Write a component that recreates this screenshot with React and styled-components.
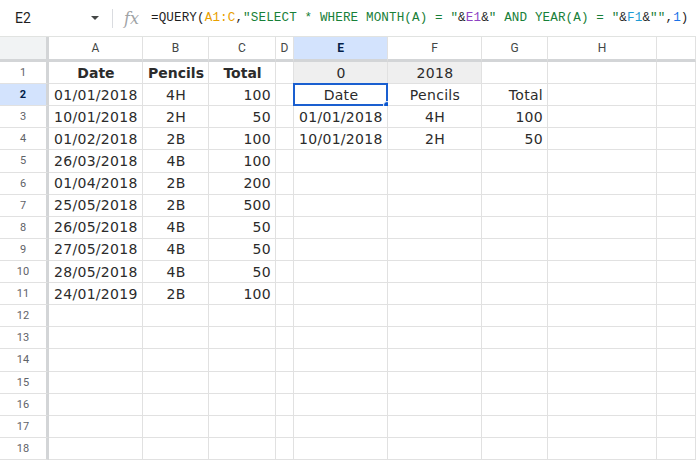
import React from 'react'
import styled, { createGlobalStyle, css } from 'styled-components'

const Global = createGlobalStyle`
  html, body {
    margin: 0;
    padding: 0;
    background: #fff;
    overflow: hidden;
  }
  * { box-sizing: border-box; }
`

const Page = styled.div`
  width: 696px;
  height: 464px;
  overflow: hidden;
  background: #fff;
`

const FormulaBar = styled.div`
  height: 37px;
  display: flex;
  align-items: center;
  border-bottom: 1px solid #e1e3e1;
`

const NameBox = styled.div`
  width: 113px;
  display: flex;
  align-items: center;
  justify-content: space-between;
  padding: 0 13px 0 15px;
  font-family: Roboto, 'Liberation Sans', sans-serif;
  font-size: 14px;
  color: #1f1f1f;
  border-right: 1px solid #dadce0;
  height: 19px;
`

const Caret = styled.span`
  width: 0;
  height: 0;
  border-left: 4px solid transparent;
  border-right: 4px solid transparent;
  border-top: 4px solid #444746;
`

const Fx = styled.span`
  margin: 0 12px 0 11px;
  font-family: 'DejaVu Serif', 'Liberation Serif', serif;
  font-style: italic;
  font-size: 16px;
  color: #a0a3a6;
`

const Formula = styled.div`
  font-family: 'Liberation Mono', monospace;
  font-size: 12.6px;
  letter-spacing: 0.12px;
  color: #1f1f1f;
  white-space: pre;
`

const Tok = styled.span`
  color: ${p => p.c};
`

const Grid = styled.div`
  display: grid;
  grid-template-columns: 49px 94px 66px 67px 18px 94px 94px 66px 109px 1fr;
  grid-template-rows: 25px;
  grid-auto-rows: 22.12px;
`

const Corner = styled.div`
  background: #f1f3f4;
  border-right: 3px solid #d3d5d7;
  border-bottom: 3px solid #d3d5d7;
`

const ColHead = styled.div`
  display: flex;
  align-items: center;
  justify-content: center;
  font-family: Roboto, 'Liberation Sans', sans-serif;
  font-size: 12px;
  color: #444746;
  border-right: 1px solid #e1e1e1;
  border-bottom: 3px solid #d3d5d7;
  ${p => p.active && css`
    background: #d3e3fd;
    color: #041e49;
    font-weight: 700;
  `}
`

const RowHead = styled.div`
  display: flex;
  align-items: center;
  justify-content: center;
  font-family: Roboto, 'Liberation Sans', sans-serif;
  font-size: 11px;
  color: #5f6368;
  border-right: 3px solid #d3d5d7;
  border-bottom: 1px solid #e1e1e1;
  ${p => p.active && css`
    background: #d3e3fd;
    color: #041e49;
    font-weight: 700;
  `}
`

const Cell = styled.div`
  position: relative;
  display: flex;
  align-items: center;
  justify-content: ${p => p.align === 'right' ? 'flex-end' : p.align === 'center' ? 'center' : 'flex-start'};
  padding: 0 4px 0 5px;
  font-family: 'DejaVu Sans', Verdana, sans-serif;
  font-size: 14px;
  letter-spacing: ${p => p.bold ? '0' : '0.3px'};
  font-weight: ${p => p.bold ? 700 : 400};
  color: #2b2b2b;
  background: ${p => p.bg || '#fff'};
  border-right: 1px solid #e1e1e1;
  border-bottom: 1px solid #e1e1e1;
  white-space: nowrap;
`

const Selection = styled.div`
  position: absolute;
  left: -1px;
  top: -1px;
  right: -1px;
  bottom: -1px;
  border: 2px solid #1a5fd0;
  pointer-events: none;
`

const Handle = styled.div`
  position: absolute;
  right: -5px;
  bottom: -5px;
  width: 8px;
  height: 8px;
  border-radius: 50%;
  background: #0b57d0;
  border: 1px solid #fff;
`

const cols = ['A', 'B', 'C', 'D', 'E', 'F', 'G', 'H', '']
const aligns = ['left', 'center', 'right', 'left', 'left', 'center', 'right', 'left', 'left']

const source = [
  ['01/01/2018', '4H', '100'],
  ['10/01/2018', '2H', '50'],
  ['01/02/2018', '2B', '100'],
  ['26/03/2018', '4B', '100'],
  ['01/04/2018', '2B', '200'],
  ['25/05/2018', '2B', '500'],
  ['26/05/2018', '4B', '50'],
  ['27/05/2018', '4B', '50'],
  ['28/05/2018', '4B', '50'],
  ['24/01/2019', '2B', '100'],
]

const result = [
  ['01/01/2018', '4H', '100'],
  ['10/01/2018', '2H', '50'],
]

const buildRows = () => {
  const rows = []
  for (let r = 1; r <= 18; r++) {
    const cells = Array(9).fill(null).map((_, i) => ({ text: '', align: aligns[i] }))
    if (r === 1) {
      ;['Date', 'Pencils', 'Total'].forEach((t, i) => {
        cells[i] = { text: t, align: 'center', bold: true }
      })
      cells[4] = { text: '0', align: 'center', bg: '#efefef' }
      cells[5] = { text: '2018', align: 'center', bg: '#efefef' }
    } else {
      const s = source[r - 2]
      if (s) s.forEach((t, i) => { cells[i] = { text: t, align: aligns[i] } })
      if (r === 2) {
        cells[4] = { text: 'Date', align: 'center', selected: true }
        cells[5] = { text: 'Pencils', align: 'center' }
        cells[6] = { text: 'Total', align: 'right' }
      }
      const q = result[r - 3]
      if (q) q.forEach((t, i) => { cells[i + 4] = { text: t, align: aligns[i + 4] } })
    }
    rows.push(cells)
  }
  return rows
}

const G = '#188038'
const D = '#1f1f1f'
const formula = [
  ['=QUERY(', D],
  ['A1:C', '#e8a000'],
  [',', D],
  ['"SELECT * WHERE MONTH(A) = "', G],
  ['&', D],
  ['E1', '#8e44c4'],
  ['&', D],
  ['" AND YEAR(A) = "', G],
  ['&', D],
  ['F1', '#1f9bd4'],
  ['&', D],
  ['""', G],
  [',', D],
  ['1', '#1a73e8'],
  [')', D],
]

export default function App() {
  const rows = buildRows()
  return (
    <Page>
      <Global />
      <FormulaBar>
        <NameBox>
          E2
          <Caret />
        </NameBox>
        <Fx>fx</Fx>
        <Formula>
          {formula.map(([t, c], i) => (
            <Tok key={i} c={c}>{t}</Tok>
          ))}
        </Formula>
      </FormulaBar>
      <Grid>
        <Corner />
        {cols.map((c, i) => (
          <ColHead key={i} active={c === 'E'}>{c}</ColHead>
        ))}
        {rows.map((cells, r) => (
          <React.Fragment key={r}>
            <RowHead active={r === 1}>{r + 1}</RowHead>
            {cells.map((cell, i) => (
              <Cell key={i} align={cell.align} bold={cell.bold} bg={cell.bg}>
                {cell.text}
                {cell.selected && (
                  <Selection>
                    <Handle />
                  </Selection>
                )}
              </Cell>
            ))}
          </React.Fragment>
        ))}
      </Grid>
    </Page>
  )
}
